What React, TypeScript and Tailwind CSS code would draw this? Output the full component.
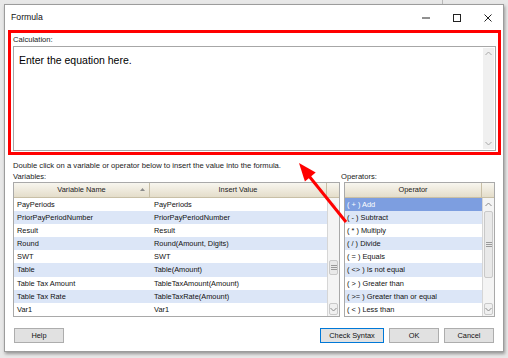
const font = "font-['Liberation_Sans',Arial,sans-serif]";

const variables: [string, string][] = [
  ["PayPeriods", "PayPeriods"],
  ["PriorPayPeriodNumber", "PriorPayPeriodNumber"],
  ["Result", "Result"],
  ["Round", "Round(Amount, Digits)"],
  ["SWT", "SWT"],
  ["Table", "Table(Amount)"],
  ["Table Tax Amount", "TableTaxAmount(Amount)"],
  ["Table Tax Rate", "TableTaxRate(Amount)"],
  ["Var1", "Var1"],
];

const operators = [
  "( + ) Add",
  "( - ) Subtract",
  "( * ) Multiply",
  "( / ) Divide",
  "( = ) Equals",
  "( <> ) Is not equal",
  "( > ) Greater than",
  "( >= ) Greater than or equal",
  "( < ) Less than",
];

function Chevron({ up, color = "#8a8a8a" }: { up?: boolean; color?: string }) {
  return (
    <svg width="7" height="5" viewBox="0 0 7 5">
      <path d={up ? "M0.5 4 L3.5 1 L6.5 4" : "M0.5 1 L3.5 4 L6.5 1"} fill="none" stroke={color} strokeWidth="1" />
    </svg>
  );
}

function Grip() {
  return (
    <svg width="6" height="5" viewBox="0 0 6 5">
      <path d="M0 0.5H6M0 2.5H6M0 4.5H6" stroke="#9a9a9a" strokeWidth="1" />
    </svg>
  );
}

function HeaderCell({ children, className = "" }: { children?: React.ReactNode; className?: string }) {
  return (
    <div
      className={`h-[15px] flex items-center justify-center bg-gradient-to-b from-[#f8f6ef] to-[#e4ddca] border-b border-r border-[#c8bfa6] text-[7.4px] text-[#1a1a1a] relative ${className}`}
    >
      {children}
    </div>
  );
}

function GridScroll({ thumbTop, thumbHeight, showUp }: { thumbTop: number; thumbHeight: number; showUp: boolean }) {
  return (
    <div className="w-[12px] flex flex-col shrink-0">
      <HeaderCell className="border-r-0" />
      <div className="flex-1 relative bg-[#f4f4f4] border-l border-[#d6d6d6]">
        <div className="h-[13px] flex items-center justify-center">
          {showUp ? <Chevron up /> : <Chevron up color="#e2e2e2" />}
        </div>
        <div
          className="absolute left-[1px] right-[1px] bg-[#e9e9e9] border border-[#c9c9c9] rounded-[2px] flex items-center justify-center"
          style={{ top: thumbTop, height: thumbHeight }}
        >
          <Grip />
        </div>
        <div className="absolute bottom-[1px] left-[1px] right-[1px] h-[12px] border border-[#c9c9c9] rounded-[2px] bg-[#f0f0f0] flex items-center justify-center">
          <Chevron />
        </div>
      </div>
    </div>
  );
}

function Button({ label, primary }: { label: string; primary?: boolean }) {
  return (
    <div
      className={`h-[15px] flex items-center justify-center bg-[#e1e1e1] border text-[7.4px] text-[#111] ${
        primary ? "border-[#0078d7] w-[64px]" : "border-[#adadad] w-[50px]"
      }`}
    >
      {label}
    </div>
  );
}

export default function App() {
  return (
    <div className={`w-[508px] h-[358px] bg-[#e8e8e8] relative overflow-hidden ${font}`}>
      <div className="absolute left-[442px] top-0 w-px h-[4px] bg-[#b8b8b8]" />
      <div className="absolute left-[4px] top-[4px] w-[500px] h-[348px] bg-white border border-[#9c9c9c] shadow-[1px_2px_3px_rgba(0,0,0,0.35)] flex flex-col">
        {/* title bar */}
        <div className="h-[25px] flex items-center shrink-0">
          <span className="pl-[6px] text-[8.7px] text-[#111]">Formula</span>
          <div className="ml-auto flex h-full">
            <div className="w-[31px] flex items-center justify-center">
              <svg width="8" height="2" viewBox="0 0 8 2">
                <path d="M0 1H8" stroke="#222" strokeWidth="1" />
              </svg>
            </div>
            <div className="w-[31px] flex items-center justify-center">
              <svg width="8" height="8" viewBox="0 0 8 8">
                <rect x="0.5" y="0.5" width="7" height="7" fill="none" stroke="#222" strokeWidth="1" />
              </svg>
            </div>
            <div className="w-[31px] flex items-center justify-center">
              <svg width="8" height="8" viewBox="0 0 8 8">
                <path d="M0.5 0.5L7.5 7.5M7.5 0.5L0.5 7.5" stroke="#222" strokeWidth="1" />
              </svg>
            </div>
          </div>
        </div>

        {/* calculation group, highlighted */}
        <div className="ml-[3px] mr-[2px] h-[125px] border-[3px] border-[#ff0000] flex flex-col shrink-0">
          <div className="h-[13px] pl-[2px] flex items-center text-[7.6px] text-[#1a1a1a]">Calculation:</div>
          <div className="ml-[2px] mr-[2px] h-[105px] border border-[#a7a7a7] flex">
            <div className="flex-1 pl-[5px] pt-[6px] text-[10.5px] text-black leading-[14px]">Enter the equation here.</div>
            <div className="w-[11px] mr-[1px] my-[1px] bg-[#f0f0f0] flex flex-col justify-between items-center py-[3px]">
              <Chevron up color="#a8a8a8" />
              <Chevron color="#a8a8a8" />
            </div>
          </div>
        </div>

        {/* lower section */}
        <div className="pl-[8px] pr-[8px] flex flex-col">
          <div className="mt-[5px] h-[11px] flex items-center text-[7.65px] text-[#1a1a1a]">
            Double click on a variable or operator below to insert the value into the formula.
          </div>
          <div className="flex gap-[1px]">
            <div className="w-[327px] flex flex-col">
              <div className="h-[11px] flex items-center text-[7.6px] text-[#1a1a1a]">Variables:</div>
              <div className="h-[135px] border border-[#a9a9a9] flex">
                <div className="flex-1 flex flex-col">
                  <div className="flex">
                    <HeaderCell className="w-[136px]">
                      Variable Name
                      <span className="absolute right-[4px] top-[5px]">
                        <svg width="5" height="3" viewBox="0 0 5 3">
                          <path d="M0 3L2.5 0L5 3Z" fill="#8c8c8c" />
                        </svg>
                      </span>
                    </HeaderCell>
                    <HeaderCell className="flex-1">Insert Value</HeaderCell>
                  </div>
                  {variables.map(([name, value], i) => (
                    <div
                      key={name}
                      className={`flex h-[13.1px] items-center text-[7.4px] text-[#111] ${i % 2 === 1 ? "bg-[#dce6f7]" : "bg-white"}`}
                    >
                      <div className="w-[137px] pl-[3px] truncate">{name}</div>
                      <div className="flex-1 pl-[3px] truncate">{value}</div>
                    </div>
                  ))}
                </div>
                <GridScroll thumbTop={62} thumbHeight={15} showUp={false} />
              </div>
            </div>
            <div className="flex-1 flex flex-col">
              <div className="h-[11px] flex items-center text-[7.6px] text-[#1a1a1a]">Operators:</div>
              <div className="ml-[3px] h-[135px] border border-[#a9a9a9] flex">
                <div className="flex-1 flex flex-col">
                  <HeaderCell>Operator</HeaderCell>
                  {operators.map((op, i) => (
                    <div
                      key={op}
                      className={`h-[13.1px] pl-[2px] flex items-center text-[7.4px] whitespace-pre ${
                        i === 0 ? "bg-[#7d9ee0] text-white" : i % 2 === 1 ? "bg-[#dce6f7] text-[#111]" : "bg-white text-[#111]"
                      }`}
                    >
                      {op}
                    </div>
                  ))}
                </div>
                <GridScroll thumbTop={13} thumbHeight={67} showUp />
              </div>
            </div>
          </div>

          {/* buttons */}
          <div className="mt-[11px] flex items-center">
            <div className="ml-[1px]">
              <Button label="Help" />
            </div>
            <div className="ml-auto mr-[1px] flex gap-[5px]">
              <Button label="Check Syntax" primary />
              <Button label="OK" />
              <Button label="Cancel" />
            </div>
          </div>
        </div>
      </div>

      {/* annotation arrow */}
      <svg className="absolute left-0 top-0 pointer-events-none" width="508" height="358" viewBox="0 0 508 358">
        <line x1="346" y1="222" x2="309" y2="176" stroke="#ff0000" strokeWidth="3" />
        <polygon points="299,163 315.7,172.6 304.9,181.4" fill="#ff0000" />
      </svg>
    </div>
  );
}
